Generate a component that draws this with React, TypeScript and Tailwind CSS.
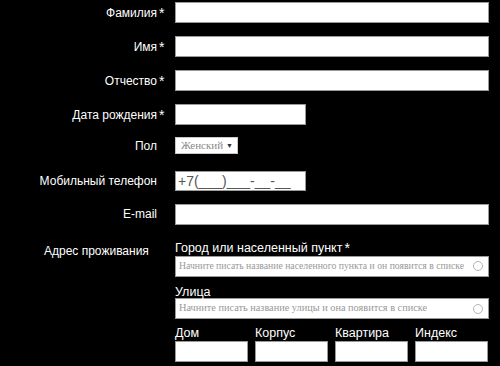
import React from 'react';

const sans = "font-['Liberation_Sans',Arial,sans-serif]";
const serif = "font-['Liberation_Serif','Times_New_Roman',serif]";

function Req() {
  return <span className="absolute left-full top-[0px] ml-[2px] text-[14px] leading-none">*</span>;
}

function Label({ text, req }: { text: string; req?: boolean }) {
  return (
    <div className="w-[157px] shrink-0 text-right text-[12px] leading-none mr-[18px]">
      <span className="relative">
        {text}
        {req && <Req />}
      </span>
    </div>
  );
}

function Field({ className = '' }: { className?: string }) {
  return <div className={`h-[21px] bg-white border border-[#9a9a9a] ${className}`} />;
}

function Circle() {
  return <span className="ml-auto mr-[5px] w-[10px] h-[10px] rounded-full border border-[#b5b5b5] shrink-0" />;
}

function Hint({ text, size }: { text: string; size: string }) {
  return (
    <span className={`${serif} ${size} text-[#999] leading-none whitespace-nowrap overflow-hidden min-w-0 mr-[6px]`}>
      {text}
    </span>
  );
}

export default function App() {
  return (
    <div className={`w-[500px] h-[366px] bg-black text-white overflow-hidden ${sans}`}>
      <div className="pt-[2px]">
        <div className="flex items-center h-[21px]">
          <Label text="Фамилия" req />
          <Field className="w-[314px]" />
        </div>
        <div className="flex items-center h-[21px] mt-[13px]">
          <Label text="Имя" req />
          <Field className="w-[314px]" />
        </div>
        <div className="flex items-center h-[21px] mt-[13px]">
          <Label text="Отчество" req />
          <Field className="w-[314px]" />
        </div>
        <div className="flex items-center h-[21px] mt-[13px]">
          <Label text="Дата рождения" req />
          <Field className="w-[131px]" />
        </div>
        <div className="flex items-center h-[17px] mt-[12px]">
          <Label text="Пол" />
          <div className="w-[63px] h-[17px] bg-white border border-[#c8c8c8] flex items-center pl-[5px] pr-[4px]">
            <span className={`${serif} text-[11px] text-[#8a8a8a] leading-none`}>Женский</span>
            <span className="ml-auto text-[7px] text-[#333] leading-none">▼</span>
          </div>
        </div>
        <div className="flex items-center h-[20px] mt-[17px]">
          <Label text="Мобильный телефон" />
          <div className="w-[131px] h-[20px] bg-white border border-[#9a9a9a] flex items-center pl-[2px]">
            <span className="text-[14px] text-[#555] leading-none">+7(___)___-__-__</span>
          </div>
        </div>
        <div className="flex items-center h-[20px] mt-[13px]">
          <Label text="E-mail" />
          <Field className="w-[314px] h-[20px]" />
        </div>
        <div className="flex mt-[18px]">
          <div className="w-[175px] shrink-0 pl-[44px] text-[12px] leading-none pt-[3px]">Адрес проживания</div>
          <div className="w-[314px]">
            <div className="text-[12.5px] leading-none">
              <span className="relative">
                Город или населенный пункт
                <Req />
              </span>
            </div>
            <div className="mt-[1px] h-[21px] bg-white border border-[#9a9a9a] flex items-center pl-[3px]">
              <Hint size="text-[9.7px]" text="Начните писать название населенного пункта и он появится в списке" />
              <Circle />
            </div>
            <div className="mt-[9px] text-[12.5px] leading-none">Улица</div>
            <div className="h-[21px] bg-white border border-[#9a9a9a] flex items-center pl-[3px]">
              <Hint size="text-[10.3px]" text="Начните писать название улицы и она появится в списке" />
              <Circle />
            </div>
            <div className="mt-[8px] flex gap-[7px]">
              {['Дом', 'Корпус', 'Квартира', 'Индекс'].map((t) => (
                <div key={t} className="w-[73px]">
                  <div className="text-[12.5px] leading-none h-[14px]">{t}</div>
                  <Field className="w-[73px]" />
                </div>
              ))}
            </div>
          </div>
        </div>
      </div>
    </div>
  );
}
